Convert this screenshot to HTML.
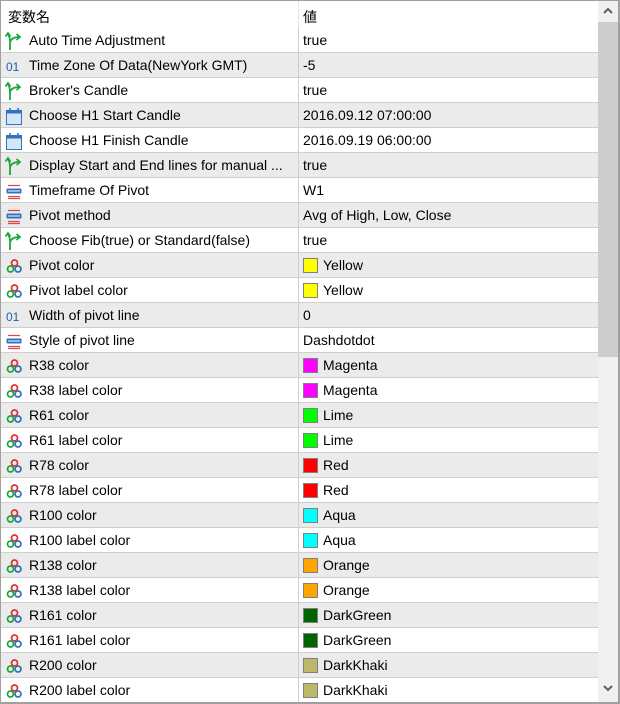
<!DOCTYPE html>
<html><head><meta charset="utf-8"><style>
*{margin:0;padding:0;box-sizing:border-box}
body{width:620px;height:704px;overflow:hidden;background:#fff;font-family:"Liberation Sans","Noto Sans CJK JP",sans-serif;font-size:14px;color:#000;position:relative}
.frame{position:absolute;left:0;top:0;width:620px;height:704px;border:1px solid #a0a0a0;border-right:2px solid #a0a0a0;border-bottom:2px solid #a0a0a0}
.hdr{position:absolute;left:1px;top:1px;width:597px;height:27px;background:#fff}
.hdr span{position:absolute;top:6px}
.hdr .d{position:absolute;left:297px;top:0;width:1px;height:27px;background:#e5e5e5}
.row{position:absolute;left:1px;width:597px;height:25px;border-bottom:1px solid #cfcfcf}
.row.g{background:#ebebeb}
.row .n{position:absolute;left:28px;top:4px;white-space:nowrap;width:268px;overflow:hidden}
.row .v{position:absolute;left:302px;top:4px;white-space:nowrap}
.row .v.s{left:322px}
.row .d{position:absolute;left:297px;top:0;width:1px;height:25px;background:#cfcfcf}
.row svg{position:absolute;left:3px;top:3px}
.sw{position:absolute;left:302px;top:5px;width:15px;height:15px;border:1px solid #808080}
.sb{position:absolute;left:598px;top:1px;width:20px;height:701px;background:#f0f0f0}
.th{position:absolute;left:598px;top:22px;width:20px;height:335px;background:#cdcdcd}
</style></head><body>
<div class="hdr"><span style="left:7px">変数名</span><span style="left:302px">値</span><div class="d"></div></div>
<div id="rows"></div>
<div class="sb"></div><div class="th"></div>
<svg style="position:absolute;left:601px;top:6px" width="14" height="10"><path d="M3 7 L7 3 L11 7" stroke="#606060" stroke-width="2" fill="none"/></svg>
<svg style="position:absolute;left:601px;top:683px" width="14" height="10"><path d="M3 3 L7 7 L11 3" stroke="#606060" stroke-width="2" fill="none"/></svg>
<div class="frame"></div>
<script>
const I={
a:'<svg width="20" height="20"><path d="M6 19 V11 Q6 6 4 3 M6 11 Q8 6 15 6" stroke="#1aa83a" stroke-width="1.8" fill="none"/><path d="M1.5 5.5 L4 2 L6.5 5.5 M12.5 3 L16 6 L12.5 9" stroke="#1aa83a" stroke-width="1.7" fill="none"/></svg>',
o:'<svg width="20" height="20"><text x="2" y="15" font-size="12" font-family="Liberation Sans" fill="#1f5fa8">01</text></svg>',
c:'<svg width="20" height="20"><rect x="2.5" y="4.5" width="15" height="14" fill="#d5e6f7" stroke="#2f73c0"/><rect x="2.5" y="4.5" width="15" height="3" fill="#2f73c0"/><path d="M6 2 V6 M14 2 V6" stroke="#2f73c0" stroke-width="1.6"/></svg>',
l:'<svg width="20" height="20"><path d="M4 4.5 H16 M4 15.5 H16 M4 17.5 H16" stroke="#e04848" stroke-width="1.2"/><rect x="2.5" y="7.5" width="15" height="5" rx="1" fill="#2f73c0"/><path d="M4 10 H16" stroke="#fff"/></svg>',
k:'<svg width="20" height="20"><circle cx="10.5" cy="7" r="3" fill="none" stroke="#e03030" stroke-width="1.7"/><circle cx="6.5" cy="13" r="3" fill="none" stroke="#1aa83a" stroke-width="1.7"/><circle cx="14" cy="13" r="3" fill="none" stroke="#2f73c0" stroke-width="1.7"/></svg>'};
const R=[['a','Auto Time Adjustment','true'],['o','Time Zone Of Data(NewYork GMT)','-5'],['a',"Broker's Candle",'true'],['c','Choose H1 Start Candle','2016.09.12 07:00:00'],['c','Choose H1 Finish Candle','2016.09.19 06:00:00'],['a','Display Start and End lines for manual ...','true'],['l','Timeframe Of Pivot','W1'],['l','Pivot method','Avg of High, Low, Close'],['a','Choose Fib(true) or Standard(false)','true'],
['k','Pivot color','Yellow','#ffff00'],['k','Pivot label color','Yellow','#ffff00'],['o','Width of pivot line','0'],['l','Style of pivot line','Dashdotdot'],
['k','R38 color','Magenta','#ff00ff'],['k','R38 label color','Magenta','#ff00ff'],['k','R61 color','Lime','#00ff00'],['k','R61 label color','Lime','#00ff00'],['k','R78 color','Red','#ff0000'],['k','R78 label color','Red','#ff0000'],['k','R100 color','Aqua','#00ffff'],['k','R100 label color','Aqua','#00ffff'],['k','R138 color','Orange','#ffa500'],['k','R138 label color','Orange','#ffa500'],['k','R161 color','DarkGreen','#006400'],['k','R161 label color','DarkGreen','#006400'],['k','R200 color','DarkKhaki','#bdb76b'],['k','R200 label color','DarkKhaki','#bdb76b']];
let h='';R.forEach((r,i)=>{h+=`<div class="row${i%2?' g':''}" style="top:${28+25*i}px">${I[r[0]]}<span class="n">${r[1]}</span><div class="d"></div>${r[3]?`<div class="sw" style="background:${r[3]}"></div><span class="v s">${r[2]}</span>`:`<span class="v">${r[2]}</span>`}</div>`});
document.getElementById('rows').innerHTML=h;
</script>
</body></html>
